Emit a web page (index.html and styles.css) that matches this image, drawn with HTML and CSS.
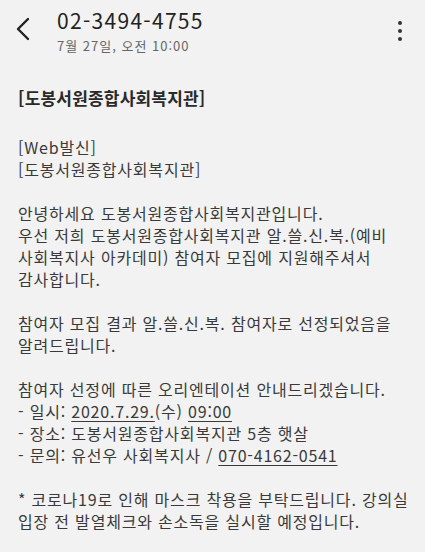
FILE: index.html
```html
<!DOCTYPE html>
<html lang="ko">
<head>
<meta charset="utf-8">
<link rel="stylesheet" href="styles.css">
</head>
<body>
<div class="app">
  <header class="top">
    <div class="back">
      <svg width="16" height="24" viewBox="0 0 16 24"><path d="M13 2 L3 12 L13 22" fill="none" stroke="#222" stroke-width="2.4" stroke-linecap="round" stroke-linejoin="round"/></svg>
    </div>
    <div class="titles">
      <div class="phone">02-3494-4755</div>
      <div class="date">7월 27일, 오전 10:00</div>
    </div>
    <div class="more">
      <span class="dot"></span><span class="dot"></span><span class="dot"></span>
    </div>
  </header>
  <main class="msg">
    <p class="head">[도봉서원종합사회복지관]</p>
    <p class="para">[Web발신]<br>[도봉서원종합사회복지관]</p>
    <p class="para">안녕하세요 도봉서원종합사회복지관입니다.<br>우선 저희 도봉서원종합사회복지관 알.쓸.신.복.(예비<br>사회복지사 아카데미) 참여자 모집에 지원해주셔서<br>감사합니다.</p>
    <p class="para">참여자 모집 결과 알.쓸.신.복. 참여자로 선정되었음을<br>알려드립니다.</p>
    <p class="para">참여자 선정에 따른 오리엔테이션 안내드리겠습니다.<br>- 일시: <span class="link">2020.7.29.</span>(수) <span class="link">09:00</span><br>- 장소: 도봉서원종합사회복지관 5층 햇살<br>- 문의: 유선우 사회복지사 / <span class="link">070-4162-0541</span></p>
    <p class="para">* 코로나19로 인해 마스크 착용을 부탁드립니다. 강의실<br>입장 전 발열체크와 손소독을 실시할 예정입니다.</p>
  </main>
</div>
</body>
</html>
```
FILE: styles.css
```css
html, body {
  margin: 0;
  padding: 0;
  background: #f2f2f2;
}
body {
  font-family: "Noto Sans CJK KR", "Noto Sans", sans-serif;
  color: #3a3a3a;
  width: 425px;
  height: 552px;
  overflow: hidden;
}
.top {
  display: flex;
  align-items: flex-start;
  height: 68px;
  padding: 0 0 0 15px;
}
.back {
  margin-top: 17px;
  width: 42px;
}
.titles {
  flex: 1;
  padding-top: 6px;
}
.phone {
  font-size: 21px;
  line-height: 28px;
  letter-spacing: 1.3px;
  color: #222;
}
.date {
  font-size: 13px;
  line-height: 18px;
  margin-top: 3px;
  letter-spacing: 1px;
  color: #666;
}
.more {
  display: flex;
  flex-direction: column;
  gap: 4px;
  margin: 21px 23px 0 0;
}
.dot {
  width: 4px;
  height: 4px;
  border-radius: 50%;
  background: #333;
}
.msg {
  padding: 18px 18px 0 18px;
  font-size: 16px;
  line-height: 22px;
  letter-spacing: 0.8px;
  white-space: nowrap;
}
.msg p {
  margin: 0;
}
.head {
  font-weight: bold;
  font-size: 17px;
  line-height: 24px;
  letter-spacing: 0.2px;
  color: #2a2a2a;
  margin-bottom: 26px !important;
}
.para {
  margin-bottom: 22px !important;
}
.link {
  text-decoration: underline;
  text-underline-offset: 3px;
}
```
